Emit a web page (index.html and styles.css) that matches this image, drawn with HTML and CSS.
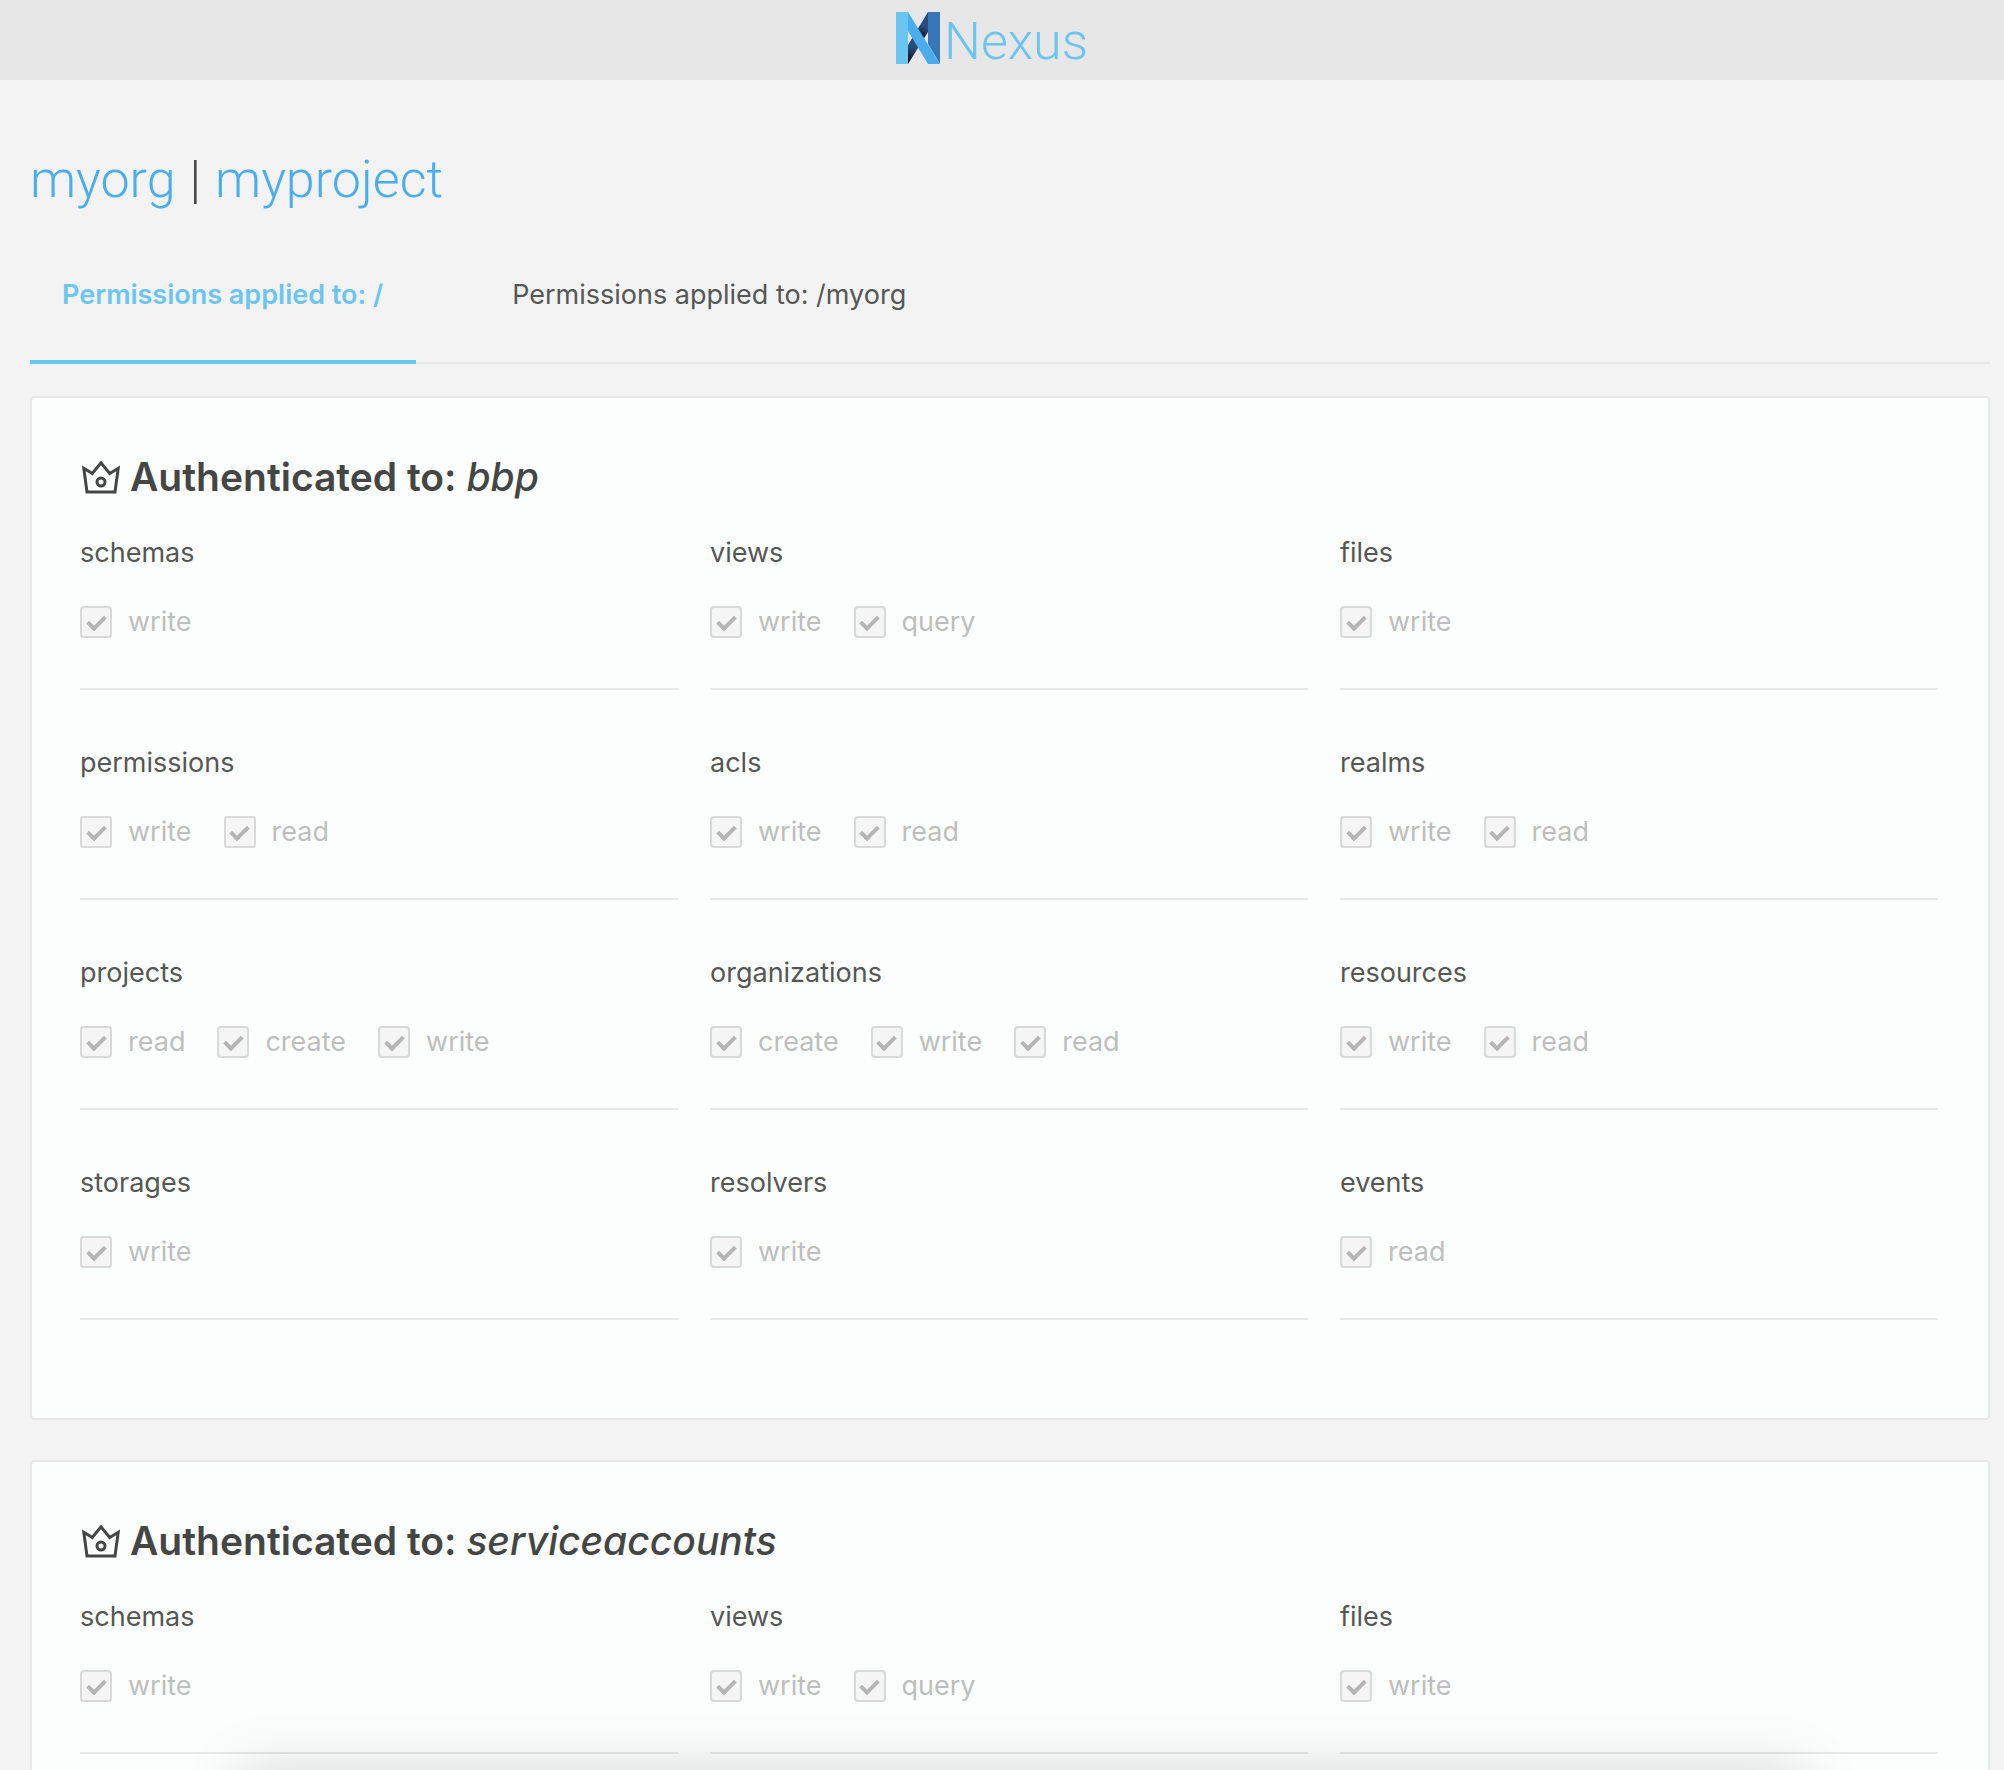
FILE: index.html
```html
<!DOCTYPE html>
<html lang="en">
<head>
<meta charset="utf-8">
<title>Nexus</title>
<link rel="stylesheet" href="styles.css">
</head>
<body>
<header class="topbar">
  <a class="brand" href="#">
    <svg class="brand-mark" viewBox="0 0 44 52" aria-hidden="true">
      <defs>
        <linearGradient id="fold" gradientUnits="userSpaceOnUse" x1="12" y1="48" x2="32" y2="6">
          <stop offset="0" stop-color="#0c1220"/>
          <stop offset=".28" stop-color="#2c4a7c"/>
          <stop offset=".5" stop-color="#2c4a7c"/>
          <stop offset=".54" stop-color="#0c1220"/>
          <stop offset=".8" stop-color="#2c4a7c"/>
        </linearGradient>
      </defs>
      <path fill="url(#fold)" d="M32 0v20L12 52V33z"/>
      <path fill="#3876ba" d="M32 0h12v52L32 32z"/>
      <path fill="#4aaeee" d="M12 0l32 52H32L12 19z"/>
      <path fill="#6ac6f0" d="M0 0h12v52H0z"/>
    </svg>
    <span class="brand-name">Nexus</span>
  </a>
</header>
<main class="page">
  <h1 class="crumbs"><a href="#">myorg</a><span class="bar">|</span><a href="#">myproject</a></h1>
  <nav class="tabs">
    <button type="button" class="tab tab-active">Permissions applied to: /</button>
    <button type="button" class="tab">Permissions applied to: /myorg</button>
  </nav>
  <div class="cards" id="cards"></div>
</main>
<div class="drawer"></div>
<script src="app.js"></script>
</body>
</html>
```
FILE: app.js
```js
const realms = {
  bbp: [
    ['schemas', 'write'], ['views', 'write', 'query'], ['files', 'write'],
    ['permissions', 'write', 'read'], ['acls', 'write', 'read'], ['realms', 'write', 'read'],
    ['projects', 'read', 'create', 'write'], ['organizations', 'create', 'write', 'read'], ['resources', 'write', 'read'],
    ['storages', 'write'], ['resolvers', 'write'], ['events', 'read']
  ],
  serviceaccounts: [
    ['schemas', 'write'], ['views', 'write', 'query'], ['files', 'write']
  ]
};

const crown = `<svg class="crown" viewBox="0 0 38 34" aria-hidden="true">
  <path d="M1.800 8.300L10.300 13.500 19 2.800 27.700 13.500 36.200 8.300 33 32H5z"/>
  <circle cx="19" cy="22" r="4"/></svg>`;

const box = name => `<label class="perm"><input type="checkbox" checked disabled>${name}</label>`;

const group = ([title, ...perms]) => `<fieldset class="group"><legend>${title}</legend>
  <div class="perms">${perms.map(box).join('')}</div></fieldset>`;

document.getElementById('cards').innerHTML = Object.entries(realms).map(([realm, groups]) => `
  <section class="card">
    <h2 class="card-title">${crown}<span>Authenticated to: <em>${realm}</em></span></h2>
    <div class="grid">${groups.map(group).join('')}</div>
  </section>`).join('');
```
FILE: styles.css
```css
*, *::before { box-sizing: border-box; }
html { scrollbar-width: none; }
body {
  margin: 0;
  background: #f3f3f3;
  color: #555756;
  font: 27px/42px Inter, "Liberation Sans", sans-serif;
}
a { color: #4aaeee; text-decoration: none; }

.topbar {
  display: flex;
  justify-content: center;
  height: 80px;
  padding: 12px 20px 0 0;
  background: #e7e7e7;
}
.brand { display: flex; gap: 4px; height: 52px; }
.brand-mark { width: 44px; height: 52px; }
.brand-name { color: #6ac6f0; font-family: Roboto, sans-serif; font-size: 52px; line-height: 60px; font-weight: 300; }

.page { padding: 68px 14px 0 30px; }
.crumbs {
  display: flex;
  gap: 14px;
  margin: 0;
  font-family: Roboto, sans-serif;
  font-size: 52px;
  line-height: 64px;
  font-weight: 300;
}
.bar { color: #444645; }

.tabs {
  display: flex;
  gap: 64px;
  margin: 40px 0 32px;
  border-bottom: 2px solid #e8e8e8;
}
.tab {
  height: 112px;
  margin-bottom: -2px;
  padding: 0 33px 22px 32px;
  border: 0;
  border-bottom: 4px solid transparent;
  background: none;
  color: inherit;
  font: inherit;
}
.tab-active { border-bottom-color: #6ac6f0; color: #6ac6f0; font-weight: 600; }

.cards { display: flex; flex-direction: column; gap: 40px; }
.card {
  padding: 48px 50px 98px 48px;
  border: 2px solid #e8e8e8;
  border-radius: 4px;
  background: #fcfefd;
}
.card-title {
  display: flex;
  align-items: center;
  gap: 10px;
  margin: 0 0 24px;
  padding-left: 2px;
  color: #444645;
  font-size: 39px;
  line-height: 62px;
  font-weight: 600;
}
.card-title em { font-weight: 500; }
.crown { width: 38px; height: 34px; fill: none; stroke: #444645; stroke-width: 3; }

.grid { display: grid; grid-template-columns: repeat(3, 1fr); gap: 52px 32px; }
.group {
  display: flex;
  flex-direction: column;
  gap: 27px;
  min-width: 0;
  margin: 0;
  padding: 0 0 45px;
  border: 0;
  border-bottom: 2px solid #e8e8e8;
}
.group legend { float: left; padding: 0; }
.perms { display: flex; gap: 32px; }
.perm { display: flex; align-items: center; gap: 16px; color: #bdbebd; }
.perm input {
  appearance: none;
  display: grid;
  place-items: center;
  width: 32px;
  height: 32px;
  margin: 0;
  border: 2px solid #d9d9d9;
  border-radius: 4px;
  background: #f5f5f5;
}
.perm input:checked::before {
  content: "";
  width: 11px;
  height: 18px;
  margin-bottom: 3px;
  border: solid #b5b5b5;
  border-width: 0 4px 4px 0;
  transform: rotate(45deg);
}

.drawer {
  position: fixed;
  top: 100%;
  left: 12%;
  right: 10%;
  height: 100px;
  box-shadow: 0 0 60px rgba(0, 0, 0, .15);
}
```
